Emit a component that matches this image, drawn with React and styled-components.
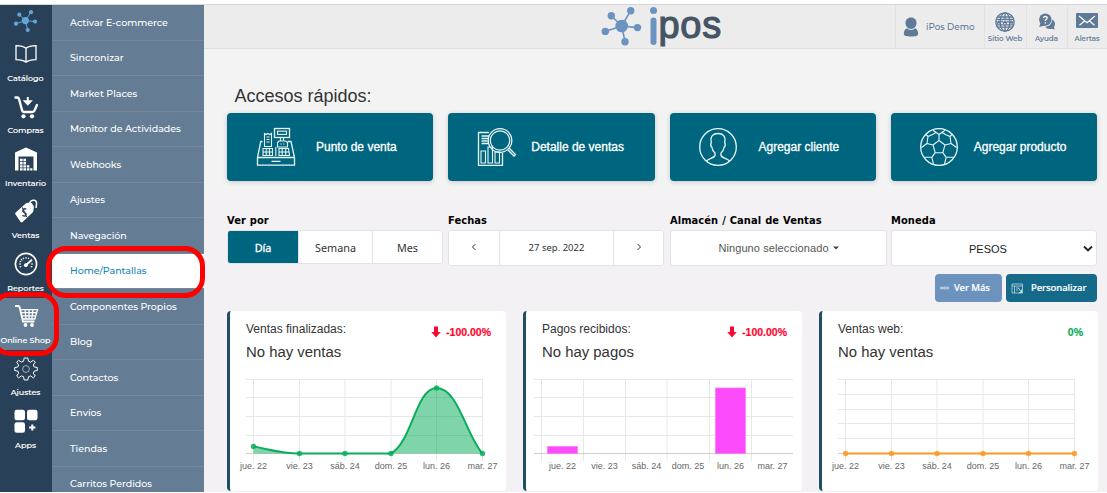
import React from 'react';
import styled, { createGlobalStyle } from 'styled-components';

const arial = '"Liberation Sans", Arial, sans-serif';
const tahoma = '"Noto Sans", Tahoma, sans-serif';
const tahomaBold = '"DejaVu Sans Condensed", "DejaVu Sans", Tahoma, sans-serif';
const geometric = 'Montserrat, Inter, sans-serif';
const teal = '#00667f';

const GlobalStyle = createGlobalStyle`
  * { box-sizing: border-box; }
  body { margin: 0; background: #f3f3f3; overflow: hidden; }
  button { border: 0; margin: 0; padding: 0; background: none; }
`;

const Page = styled.div`
  position: relative;
  width: 1107px;
  height: 493px;
  padding-top: 4px;
  display: flex;
  flex-direction: column;
  background: #fff;
  overflow: hidden;
  font-family: ${arial};
`;

const Body = styled.div`
  display: flex;
  height: 488px;
  border-top: 1px solid #d6d6d6;
`;

const Rail = styled.nav`
  width: 52px;
  flex: none;
  background: #294158;
  overflow: hidden;
`;

const RailLogo = styled.div`
  height: 31px;
  svg { display: block; }
`;

const RailItem = styled.div`
  height: 52.4px;
  display: flex;
  flex-direction: column;
  align-items: center;
  padding-right: 1px;
  background: ${(p) => (p.$active ? '#647d95' : 'transparent')};
  color: #fff;
  svg { display: block; margin-top: 5.3px; flex: none; }
`;

const RailLabel = styled.span`
  margin-top: 4.7px;
  font: 500 8px/12px ${geometric};
  -webkit-text-stroke: 0.15px #fff;
  white-space: nowrap;
`;

const SubMenu = styled.nav`
  width: 152px;
  flex: none;
  background: #647d95;
  overflow: hidden;
`;

const SubItem = styled.div`
  height: 35.5px;
  padding: 1px 0 0 18px;
  display: flex;
  align-items: center;
  font: 500 9.5px/12px ${geometric};
  letter-spacing: -0.03px;
  color: ${(p) => (p.$active ? '#1387b4' : '#fff')};
  background: ${(p) => (p.$active ? '#fff' : 'transparent')};
  border-bottom: 1px solid #77879a;
`;

const Main = styled.main`
  flex: 1;
  min-width: 0;
  display: flex;
  flex-direction: column;
  background: #f3f1f4;
`;

const Header = styled.header`
  height: 44px;
  display: flex;
  background: #ececec;
  border-bottom: 1px solid #dedfe5;
`;

const Brand = styled.div`
  flex: 1;
  padding-left: 396px;
  svg { display: block; }
`;

const HeaderCell = styled.div`
  width: ${(p) => p.$w}px;
  border-left: 1px solid #e2e2e4;
  color: #5f7a97;
`;

const Account = styled(HeaderCell)`
  display: flex;
  align-items: center;
  padding-left: 7px;
  gap: 7px;
  font: 500 8.8px/12px ${geometric};
`;

const HeaderLink = styled(HeaderCell)`
  display: flex;
  flex-direction: column;
  align-items: center;
  padding: 7px 1px 0 0;
  font: 500 7.1px/10px ${geometric};
  -webkit-text-stroke: 0.15px #5f7a97;
  white-space: nowrap;
  svg { display: block; margin-bottom: 2px; }
`;

const Shortcuts = styled.section`
  height: 150px;
  padding: 36px 10px 0 23px;
  background: #f3f3f3;
`;

const Title = styled.h1`
  margin: 0 0 6px 7.5px;
  font: 400 18px/22px ${arial};
  color: #333;
`;

const ShortcutGrid = styled.div`
  display: grid;
  grid-template-columns: repeat(4, 1fr);
  gap: 15px;
`;

const Shortcut = styled.button`
  height: 68px;
  border-radius: 4px;
  background: ${teal};
  box-shadow: 0 1px 5px rgba(0, 0, 0, 0.18);
  display: flex;
  align-items: center;
  padding-left: ${(p) => p.$pad}px;
  gap: ${(p) => p.$gap}px;
  color: #fff;
  font: 400 12px/16px ${arial};
  -webkit-text-stroke: 0.3px #fff;
  white-space: nowrap;
  svg { flex: none; }
`;

const Filters = styled.section`
  padding: 15px 0 0 23px;
  display: grid;
  grid-template-columns: 221px 222px 221px 207px;
`;

const FilterLabel = styled.div`
  font: 700 11px/14px ${tahomaBold};
  letter-spacing: 0.08px;
  word-spacing: 0.4px;
  color: #000;
  margin-bottom: 2px;
`;

const Segments = styled.div`
  display: flex;
  width: ${(p) => p.$w}px;
  height: ${(p) => p.$h}px;
  border: 1px solid #e3e2e6;
  border-radius: 3px;
  overflow: hidden;
  background: #fff;
`;

const Segment = styled.div`
  width: ${(p) => p.$w}px;
  padding-top: ${(p) => p.$drop || 0}px;
  display: flex;
  align-items: center;
  justify-content: center;
  background: ${(p) => (p.$active ? teal : '#fff')};
  color: ${(p) => (p.$active ? '#fff' : '#333')};
  -webkit-text-stroke: ${(p) => (p.$active ? '0.3px #fff' : '0')};
  font: 400 ${(p) => p.$size || 10.8}px/14px ${tahoma};
  & + & { border-left: 1px solid #e3e2e6; }
`;

const Select = styled.div`
  width: ${(p) => p.$w}px;
  height: 36px;
  border: 1px solid #e3e2e6;
  border-radius: 3px;
  background: #fff;
  display: flex;
  align-items: center;
  font: 400 11px/14px ${arial};
  letter-spacing: ${(p) => p.$track || '0'};
  color: ${(p) => p.$color};
  padding: ${(p) => p.$pad};
  gap: 4px;
  justify-content: ${(p) => p.$justify};
`;

const Actions = styled.div`
  display: flex;
  justify-content: flex-end;
  gap: 4px;
  padding: 8px 10px 9px 0;
`;

const Action = styled.button`
  width: ${(p) => p.$w}px;
  height: 28px;
  border-radius: 4px;
  background: ${(p) => p.$bg};
  display: flex;
  align-items: center;
  padding-left: 5px;
  gap: ${(p) => p.$gap}px;
  color: #fff;
  font: 500 9.5px/14px ${tahoma};
  letter-spacing: -0.07px;
  -webkit-text-stroke: 0.2px #fff;
  white-space: nowrap;
`;

const Cards = styled.section`
  display: grid;
  grid-template-columns: repeat(3, 279px);
  gap: 17px;
  padding-left: 23px;
`;

const Card = styled.article`
  height: 180px;
  background: #fff;
  border-left: 3px solid #1f4f63;
  border-radius: 4px;
`;

const CardHead = styled.div`
  height: 54px;
  display: flex;
  justify-content: space-between;
  padding: 11px 15px 0 16px;
`;

const CardName = styled.div`
  font: 400 12px/14px ${arial};
  color: #333;
`;

const CardValue = styled.div`
  margin-top: 7px;
  font: 400 14.9px/18px ${arial};
  color: #333;
`;

const Delta = styled.div`
  display: flex;
  align-items: center;
  height: 14px;
  margin-top: 3px;
  gap: 5px;
  font: 700 10.5px/14px ${arial};
  -webkit-text-stroke: 0.2px ${(p) => p.$color};
  color: ${(p) => p.$color};
`;

const ChartSvg = styled.svg`
  display: block;
  text { font: 400 9px ${arial}; fill: #666; text-anchor: middle; }
`;

const Ring = styled.div`
  position: absolute;
  left: ${(p) => p.$x}px;
  top: ${(p) => p.$y}px;
  width: ${(p) => p.$w}px;
  height: ${(p) => p.$h}px;
  border: 5px solid #fe0000;
  border-radius: ${(p) => p.$r}px;
  pointer-events: none;
`;

/* ---------- icons ---------- */

const Nodes = ({ c, nodes, r, R, color, sw }) => (
  <g fill={color} stroke={color}>
    {nodes.map(([x, y]) => (
      <React.Fragment key={x}>
        <line x1={c[0]} y1={c[1]} x2={x} y2={y} strokeWidth={sw} />
        <circle cx={x} cy={y} r={r} stroke="none" />
      </React.Fragment>
    ))}
    <circle cx={c[0]} cy={c[1]} r={R} stroke="none" />
  </g>
);

const RailIcon = ({ children }) => (
  <svg width="26" height="26" viewBox="0 0 26 26" fill="none" stroke="#fff">{children}</svg>
);

const BookIcon = () => (
  <RailIcon>
    <path d="M13 7.2C10.500 5 6.500 4.700 3 4.600V18.600C7 18.700 10.500 19.200 13 21.200C15.500 19.200 19 18.700 23 18.600V4.600C19.500 4.700 15.500 5 13 7.200ZM13 7.200V21" strokeWidth="1.300" />
  </RailIcon>
);

const CartInIcon = () => (
  <RailIcon>
    <path d="M2.500 3.500H4.200C5.300 3.500 5.700 4 6 5L9 16C9.300 17.300 10 18 11.300 18H19.500C20.500 18 21 17.500 21.500 16.500L24 11" strokeWidth="2.400" strokeLinecap="round" />
    <path d="M14.800 3V8M12 7.200L14.800 10.200L17.600 7.200Z" strokeWidth="2" fill="#fff" />
    <circle cx="10.500" cy="22.300" r="2.100" fill="#fff" stroke="none" />
    <circle cx="19" cy="22.300" r="2.100" fill="#fff" stroke="none" />
  </RailIcon>
);

const WarehouseIcon = () => (
  <RailIcon>
    <path d="M2 6.500L13 1.500L24 6.500V24.500H20.500V10.500H5.500V24.500H2Z" fill="#fff" stroke="none" />
    <path d="M7 14H9.600M10.400 14H13M7 17.200H9.600M10.400 17.200H13M7 20.400H9.600M10.400 20.400H13M13.800 20.400H16.400M7 23.400H9.600M10.400 23.400H13M13.800 23.400H16.400M17.200 23.400H19.400" strokeWidth="2.400" />
  </RailIcon>
);

const TagIcon = () => (
  <RailIcon>
    <path d="M2.700 14.500L12.700 5.500C13.500 4.800 14.500 4.600 15.500 4.700L18.500 5L20.800 8L20.500 12.500C20.400 13.500 20 14.200 19.300 14.800L9.600 24C9 24.600 8.200 24.500 7.700 23.900L2.500 16.600C2 15.900 2.100 15.100 2.700 14.500Z" fill="#fff" stroke="none" />
    <path d="M17 9.500C14.800 6.500 17 3 19.800 2.300C22.500 1.700 24 3.500 23.500 6.500L23 10" strokeWidth="1.500" />
    <path d="M14.500 11.500C12.500 10.500 10.500 12 11 13.800C11.500 15.400 13.800 14.800 14.300 16.300C14.800 18.200 12.500 19.300 10.600 17.600M10.500 10L14.800 19.300" stroke="#294158" strokeWidth="1.300" transform="translate(-1.200 -0.400)" />
  </RailIcon>
);

const GaugeIcon = () => (
  <RailIcon>
    <circle cx="13" cy="13" r="10.600" strokeWidth="1.600" />
    <path d="M6 13H8M8 8L9.300 9.300M13 6V7.800M10.200 6.700L10.800 8M15.800 6.700L15.200 8M18 13H20M6.700 16L8.300 15.400M19.300 16L17.700 15.400M6.700 10.200L8.200 10.800" strokeWidth="1.100" />
    <path d="M13 14L19 8.800" strokeWidth="1.800" />
    <circle cx="12.800" cy="14.200" r="1.900" fill="#fff" stroke="none" />
  </RailIcon>
);

const CartIcon = () => (
  <RailIcon>
    <path d="M2 3H5.200C6 3 6.400 3.400 6.600 4.200L10 18.500H21.500" strokeWidth="1.800" />
    <path d="M7.500 6.700H24.500L21.800 16H9.800M8.200 9.700H23.500M9 12.800H22.700M12 6.700L13 16M16 6.700V16M20 6.700L18.800 16" strokeWidth="1.300" />
    <circle cx="12.500" cy="22" r="1.900" fill="#fff" stroke="none" />
    <circle cx="19" cy="22" r="1.900" fill="#fff" stroke="none" />
  </RailIcon>
);

const GearIcon = () => (
  <RailIcon>
    <path d="M11.200 2H14.800L15.500 5.200L17.600 6.100L20.400 4.300L22.300 6.200L20.300 9L21.100 10.900L24.300 11.500V14.500L21.100 15.200L20.300 17.200L22.300 20L20.400 21.900L17.600 19.900L15.500 20.700L14.800 24H11.200L10.500 20.700L8.400 19.900L5.600 21.900L3.700 20L5.600 17.200L4.900 15.200L1.700 14.500V11.500L4.900 10.900L5.600 9L3.700 6.200L5.600 4.300L8.400 6.100L10.500 5.200Z" strokeWidth="1" strokeLinejoin="round" />
    <circle cx="13" cy="13" r="3.400" strokeWidth="0.800" strokeOpacity="0.700" />
  </RailIcon>
);

const AppsIcon = () => (
  <RailIcon>
    <g fill="#fff" stroke="none">
      <rect x="1.500" y="1.700" width="10.500" height="10.500" rx="2.200" />
      <rect x="14" y="1.700" width="10.500" height="10.500" rx="2.200" />
      <rect x="1.500" y="14.200" width="10.500" height="10.500" rx="2.200" />
    </g>
    <path d="M19.300 16.400V22.600M16.200 19.500H22.400" strokeWidth="2" />
  </RailIcon>
);

const UserIcon = () => (
  <svg width="16" height="20" viewBox="0 0 16 20" fill="#5f7a97">
    <path d="M8 0.500C11.400 0.500 13.500 2.800 13.500 6C13.500 9.200 11 12 8 12C5 12 2.500 9.200 2.500 6C2.500 2.800 4.600 0.500 8 0.500Z" />
    <path d="M4 11.300C5 12.300 6.500 12.900 8 12.900C9.500 12.900 11 12.300 12 11.300C14 12 15.200 14 15.200 17C15.200 18.700 13 19.500 8 19.500C3 19.500 0.800 18.700 0.800 17C0.800 14 2 12 4 11.300Z" />
  </svg>
);

const GlobeIcon = () => (
  <svg width="20" height="20" viewBox="0 0 20 20" fill="none" stroke="#5f7a97">
    <circle cx="10" cy="10" r="9.200" strokeWidth="1.300" />
    <ellipse cx="10" cy="10" rx="4.800" ry="9.200" strokeWidth="1.300" />
    <path d="M10 1V7.500M10 12.500V19M2.300 5H17.700M1.500 7.300H18.500M1.500 12.800H18.500M2.300 15.200H17.700" strokeWidth="1.300" />
    <path d="M1.500 8.800L2.700 11.500L4 9L5.200 11.500L6.400 8.800M7.400 8.800L8.600 11.500L10 9L11.300 11.500L12.500 8.800M13.500 8.800L14.700 11.500L16 9L17.200 11.500L18.400 8.800" strokeWidth="1.200" />
  </svg>
);

const HelpIcon = () => (
  <svg width="18" height="20" viewBox="0 0 18 20" fill="#5f7a97">
    <path d="M14 7.500C16 8.500 17 10 17 12C17 13.200 16.600 14.200 15.900 15L16.800 17.500L13.600 16.700C11.200 17.500 8.500 16.700 7.300 14.800C11.500 14.500 14.200 11.500 14 7.500Z" />
    <circle cx="7.300" cy="7.600" r="6.200" />
    <path d="M2.500 11L1.200 15L7 13.500Z" />
    <path d="M5.500 6.100C5.700 3.600 9.400 3.800 9.200 6C9.100 7.300 7.400 7.300 7.400 8.900M7.400 10.200V11.600" fill="none" stroke="#fff" strokeWidth="1.300" />
  </svg>
);

const MailIcon = () => (
  <svg width="22" height="20" viewBox="0 0 22 20">
    <rect x="0" y="1" width="22" height="15" rx="1" fill="#5f7a97" />
    <path d="M3 4L11 10.800L19 4M3.500 13.300L8.500 9M18.500 13.300L13.500 9" fill="none" stroke="#fff" strokeWidth="1.200" />
  </svg>
);

const TileIcon = ({ children }) => (
  <svg width="40" height="40" viewBox="0 0 40 40" fill="none" stroke="#e9f6f8" strokeWidth="1.100">{children}</svg>
);

const RegisterIcon = () => (
  <TileIcon>
    <path d="M6.500 14.500H4.800L1.500 30.500V38.200H38.500V30.500L35 14.500H31.500M1.500 30.500H38.500M15.500 34.300H24.500" strokeWidth="1.300" />
    <path d="M8.500 19.500V6.500L10.200 7.500L11.800 6.500L13.500 7.500L15.500 6.500V19.500ZM10.500 10H13.500M10.500 12.500H13.500M10.500 15H13.500" />
    <rect x="18.500" y="1.500" width="15" height="9" strokeWidth="1.300" />
    <rect x="21.500" y="4.200" width="9" height="3.200" />
    <path d="M24.500 10.500V14.500M27.500 10.500V14.500M21.500 20V15.500L23 14H29.500L31.500 15.500V20ZM24.500 17H25.700M27.300 17H28.500" />
    <path d="M7 21.500H16.500V28.500H7ZM6.800 25H16.500M10.200 21.500V28.500M13.400 21.500V28.500M23 21.500H32.500L33.500 28.500H23ZM23 25H33M26.200 21.500V28.500M29.700 21.500V28.500M19.800 20V29" />
  </TileIcon>
);

const ReportIcon = () => (
  <TileIcon>
    <path d="M12 5.500H1.500V38.300H25.500V26M4.500 9H12M4.500 11.500H11M4.500 14H10.500M4.500 16.500H11" strokeWidth="1.300" />
    <path d="M4 36V24H8.500V36ZM11 36V20H15.500V36ZM18 36V25H22.500V36Z" />
    <circle cx="23" cy="13.500" r="11.800" strokeWidth="1.300" />
    <circle cx="23" cy="13.500" r="9.700" strokeWidth="1.200" />
    <path d="M30.500 22.500L37 29L38.500 27.500L32 21" strokeWidth="1.300" />
  </TileIcon>
);

const ClientIcon = () => (
  <TileIcon>
    <circle cx="20" cy="20" r="18.300" strokeWidth="1.300" />
    <path d="M8.500 34C10.500 31.500 16.500 31 17 28.500V26C15 24.500 14.200 22.500 14 20.500C12.500 19 12.500 17 13.300 15.500C12 9 15 6.500 20 6.500C25 6.500 28 9 26.700 15.500C27.500 17 27.500 19 26 20.500C25.800 22.500 25 24.500 23 26V28.500C23.500 31 29.500 31.500 31.500 34" strokeWidth="1.300" />
  </TileIcon>
);

const BallIcon = () => (
  <TileIcon>
    <circle cx="20" cy="20" r="18.300" strokeWidth="1.300" />
    <path d="M20 13.500L26 18L23.800 25.700H16.200L14 18ZM20 13.500V7.500M20 7.500L14 3.200M20 7.500L26 3.200M26 18L32 16.500M14 18L8 16.500M32 16.500L31 9.500L33 7.500M32 16.500L37.500 20.500M8 16.500L9 9.500L7 7.500M8 16.500L2.500 20.500M31 9.500L26.500 7.500L23 5.500M9 9.500L13.500 7.500L17 5.500M23.800 25.700L27.200 30.300M16.200 25.700L12.800 30.300M27.200 30.300L25.500 37M27.200 30.300H35M12.800 30.300L14.500 37M12.800 30.300H5" />
  </TileIcon>
);

const ChevronSvg = styled.svg`
  margin-bottom: 3px;
`;

const Chevron = ({ flip }) => (
  <ChevronSvg width="6" height="8" viewBox="0 0 6 8" fill="none" stroke="#333" strokeWidth="1">
    <path d={flip ? 'M1.500 1L4.500 4L1.500 7' : 'M4.500 1L1.500 4L4.500 7'} />
  </ChevronSvg>
);

const PanelIcon = () => (
  <svg width="13" height="11" viewBox="0 0 13 11" fill="none" stroke="#b9d7e2" strokeWidth="0.800">
    <path d="M1 1H11.500V10H1ZM1 3H11.500M3.500 3V10M5 5H8M5 7H7" />
    <path d="M7.500 5L10.500 9.500M10.500 6.500V9.500H8" stroke="#e1f0f4" />
  </svg>
);

/* ---------- charts ---------- */

const days = ['jue. 22', 'vie. 23', 'sáb. 24', 'dom. 25', 'lun. 26', 'mar. 27'];
const base = 88.5;

const Grid = ({ rows, xs, x1, x2 }) => (
  <g stroke="#e7e7e7" strokeWidth="1">
    {rows.map((y) => <line key={y} x1={x1} x2={x2} y1={y} y2={y} />)}
    {xs.map((x) => <line key={x} x1={x} x2={x} y1="14" y2="96" />)}
    <line x1={x1} x2={x2} y1={base} y2={base} stroke="#cfcfcf" />
  </g>
);

const LineChart = ({ rows, color, fill, values, curve }) => {
  const xs = [23.5, 69.5, 115, 161, 206.5, 252.5];
  return (
    <ChartSvg width="276" height="120">
      <Grid rows={rows} xs={xs} x1={16} x2={253} />
      {fill && <path d={`${curve}L23.5 ${base}Z`} fill={fill} />}
      <path d={curve} fill="none" stroke={color} strokeWidth="2" />
      {xs.map((x, i) => (
        <g key={x}>
          <circle cx={x} cy={values[i]} r="2.700" fill={color} fillOpacity="0.850" />
          <text x={x} y="104">{days[i]}</text>
        </g>
      ))}
    </ChartSvg>
  );
};

const BarChart = () => {
  const xs = [15.500, 57.500, 99.500, 141, 183.500, 225.500];
  const heights = [7, 0, 0, 0, 65.500, 0];
  return (
    <ChartSvg width="276" height="120">
      <Grid rows={[14.5, 32.5, 51.5, 70.500]} xs={xs} x1={8} x2={267} />
      {xs.map((x, i) => (
        <g key={x}>
          {heights[i] > 0 && (
            <rect x={x + 6} y={base - heights[i]} width="30" height={heights[i]} fill="#fb4bfb" stroke="#fb7dfb" strokeWidth="0.800" />
          )}
          <text x={x + 21} y="104">{days[i]}</text>
        </g>
      ))}
    </ChartSvg>
  );
};

const DownArrow = () => (
  <svg width="10" height="12" viewBox="0 0 10 12" fill="#fb0731"><path d="M3 0.500H7V6H9.700L5 11.500L0.300 6H3Z" /></svg>
);

const StatCard = ({ name, value, delta, color, down, children }) => (
  <Card>
    <CardHead>
      <div>
        <CardName>{name}</CardName>
        <CardValue>{value}</CardValue>
      </div>
      <Delta $color={color}>{down && <DownArrow />}{delta}</Delta>
    </CardHead>
    {children}
  </Card>
);

const rail = [
  ['Catálogo', BookIcon], ['Compras', CartInIcon], ['Inventario', WarehouseIcon], ['Ventas', TagIcon],
  ['Reportes', GaugeIcon], ['Online Shop', CartIcon], ['Ajustes', GearIcon], ['Apps', AppsIcon],
];

const submenu = [
  'Activar E-commerce', 'Sincronizar', 'Market Places', 'Monitor de Actividades', 'Webhooks', 'Ajustes',
  'Navegación', 'Home/Pantallas', 'Componentes Propios', 'Blog', 'Contactos', 'Envíos', 'Tiendas', 'Carritos Perdidos',
];

export default function App() {
  return (
    <Page>
      <GlobalStyle />
      <Body>
        <Rail>
          <RailLogo>
            <svg width="52" height="31">
              <Nodes c={[25.4, 15.6]} R={3.6} r={2.1} sw={1} color="#62a5d8" nodes={[[31, 7.2], [19.3, 9.7], [16, 18.700], [27.700, 25], [35, 16.600]]} />
            </svg>
          </RailLogo>
          {rail.map(([label, Icon]) => (
            <RailItem key={label} $active={label === 'Online Shop'}>
              <Icon />
              <RailLabel>{label}</RailLabel>
            </RailItem>
          ))}
        </Rail>
        <SubMenu>
          {submenu.map((label) => (
            <SubItem key={label} $active={label === 'Home/Pantallas'}>{label}</SubItem>
          ))}
        </SubMenu>
        <Main>
          <Header>
            <Brand>
              <svg width="126" height="43" viewBox="600 5 126 43">
                <Nodes c={[621.7, 26]} R={6.3} r={3.7} sw={1.6} color="#6b93bf" nodes={[[630.7, 10.7], [611.3, 15.7], [605.3, 31.4], [625, 41.7], [637.5, 27.600]]} />
                <circle cx="653.500" cy="10.600" r="3.500" fill="#6b93bf" />
                <rect x="650.500" y="17.500" width="6" height="27.500" rx="3" fill="#6b93bf" />
                <text x="658.500" y="38" fontFamily="Liberation Sans, Arial, sans-serif" fontSize="38" letterSpacing="0.700" fill="#455565" stroke="#455565" strokeWidth="1.200">pos</text>
              </svg>
            </Brand>
            <Account $w={89}><UserIcon />iPos Demo</Account>
            <HeaderLink $w={42}><GlobeIcon />Sitio Web</HeaderLink>
            <HeaderLink $w={41}><HelpIcon />Ayuda</HeaderLink>
            <HeaderLink $w={40}><MailIcon />Alertas</HeaderLink>
          </Header>
          <Shortcuts>
            <Title>Accesos rápidos:</Title>
            <ShortcutGrid>
              <Shortcut $pad={29} $gap={20}><RegisterIcon />Punto de venta</Shortcut>
              <Shortcut $pad={29} $gap={14}><ReportIcon />Detalle de ventas</Shortcut>
              <Shortcut $pad={28} $gap={21}><ClientIcon />Agregar cliente</Shortcut>
              <Shortcut $pad={28} $gap={15}><BallIcon />Agregar producto</Shortcut>
            </ShortcutGrid>
          </Shortcuts>
          <Filters>
            <div>
              <FilterLabel>Ver por</FilterLabel>
              <Segments $w={216} $h={34}>
                <Segment $w={70} $drop={2} $active>Día</Segment>
                <Segment $w={74} $drop={2}>Semana</Segment>
                <Segment $w={70} $drop={2}>Mes</Segment>
              </Segments>
            </div>
            <div>
              <FilterLabel>Fechas</FilterLabel>
              <Segments $w={216} $h={36}>
                <Segment $w={50}><Chevron /></Segment>
                <Segment $w={115} $size={9.5}>27 sep. 2022</Segment>
                <Segment $w={50}><Chevron flip /></Segment>
              </Segments>
            </div>
            <div>
              <FilterLabel>Almacén / Canal de Ventas</FilterLabel>
              <Select $w={217} $color="#555" $track="0.1px" $justify="center">
                Ninguno seleccionado
                <svg width="6" height="4"><path d="M0 0.500H6L3 3.500Z" fill="#444" /></svg>
              </Select>
            </div>
            <div>
              <FilterLabel>Moneda</FilterLabel>
              <Select $w={206} $color="#222" $pad="1px 3px 0 77px" $justify="space-between">
                PESOS
                <svg width="10" height="8" fill="none"><path d="M1 1.500L5 5.500L9 1.500" stroke="#222" strokeWidth="1.900" /></svg>
              </Select>
            </div>
          </Filters>
          <Actions>
            <Action $w={67} $bg="#6b93bd" $gap={5}>
              <svg width="9" height="4" fill="none" stroke="#fff" strokeWidth="0.700"><circle cx="1.500" cy="2" r="1" /><circle cx="4.500" cy="2" r="1" /><circle cx="7.500" cy="2" r="1" /></svg>
              Ver Más
            </Action>
            <Action $w={91} $bg="#146a88" $gap={7}><PanelIcon />Personalizar</Action>
          </Actions>
          <Cards>
            <StatCard name="Ventas finalizadas:" value="No hay ventas" delta="-100.00%" color="#fb0731" down>
              <LineChart
                rows={[14.5, 32.5, 51.5, 70.5]}
                color="#0aad5b"
                fill="rgba(10, 173, 91, 0.52)"
                values={[81.5, 88.5, 88.5, 88.5, 23, 88.5]}
                curve="M23.500 81.500C42 85 52 88.500 69.300 88.500H161C182 77 186 23 206.500 23C228 23 236 70 252.500 88.500"
              />
            </StatCard>
            <StatCard name="Pagos recibidos:" value="No hay pagos" delta="-100.00%" color="#fb0731" down>
              <BarChart />
            </StatCard>
            <StatCard name="Ventas web:" value="No hay ventas" delta="0%" color="#0aad5b">
              <LineChart
                rows={[14.5, 29.5, 44.5, 58.5, 73.5]}
                color="#fd9827"
                values={[88.5, 88.5, 88.5, 88.5, 88.5, 88.5]}
                curve="M23.500 88.500H252.500"
              />
            </StatCard>
          </Cards>
        </Main>
      </Body>
      <Ring $x={-9} $y={292} $w={68} $h={64} $r={19} />
      <Ring $x={46} $y={246} $w={159} $h={52} $r={20} />
    </Page>
  );
}
